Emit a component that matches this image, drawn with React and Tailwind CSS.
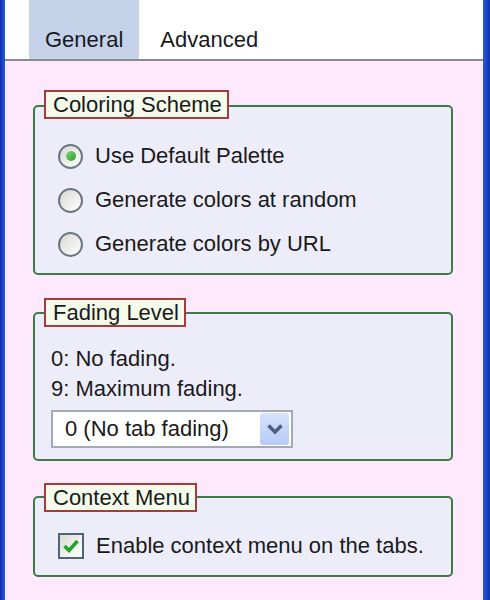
import React from "react";

const font = { fontFamily: '"Liberation Sans", Arial, sans-serif' };

function Legend({ children }) {
  return (
    <div className="relative z-10 ml-[11px] w-fit h-[29px] border-2 border-[#a43c3c] bg-[#f4fbea] pl-[7px] pr-[5px] text-[22px] leading-[25px] text-[#1a1a1a]">
      {children}
    </div>
  );
}

function Radio({ checked, label }) {
  return (
    <div className="flex h-[44px] items-center">
      <div className="flex h-[25px] w-[25px] items-center justify-center rounded-full border-2 border-[#6b7782] bg-gradient-to-br from-[#d8d8d2] to-white">
        {checked && (
          <div className="h-[10px] w-[10px] rounded-full bg-gradient-to-br from-[#7ee07e] to-[#1e9a2a]" />
        )}
      </div>
      <span className="ml-[12px] text-[22px] leading-[26px] text-[#1a1a1a]">{label}</span>
    </div>
  );
}

export default function App() {
  return (
    <div className="flex h-[600px] w-[490px] overflow-hidden bg-[#fde9fb]" style={font}>
      <div className="w-[5px] bg-gradient-to-r from-[#0a2fb0] to-[#2a5ae0]" />
      <div className="flex flex-1 flex-col">
        <div className="flex h-[59px] items-end bg-white pl-[24px]">
          <div className="flex h-full items-end bg-[#c4d2ea] px-[16px] pb-[5px] text-[22px] leading-[28px] text-[#1a1a1a]">
            General
          </div>
          <div className="pb-[5px] pl-[21px] text-[22px] leading-[28px] text-[#1a1a1a]">Advanced</div>
        </div>
        <div className="h-[2px] bg-[#8a8a8a]" />

        <div className="flex flex-col pl-[28px] pr-[30px] pt-[29px]">
          {/* Coloring Scheme */}
          <Legend>Coloring Scheme</Legend>
          <div className="-mt-[14px] h-[170px] rounded-[5px] border-2 border-[#3f7a4a] bg-[#ededfa] pl-[23px] pt-[27px]">
            <Radio checked label="Use Default Palette" />
            <Radio label="Generate colors at random" />
            <Radio label="Generate colors by URL" />
          </div>

          {/* Fading Level */}
          <div className="mt-[23px]">
            <Legend>Fading Level</Legend>
          </div>
          <div className="-mt-[15px] h-[149px] rounded-[5px] border-2 border-[#3f7a4a] bg-[#ededfa] pl-[16px] pt-[30px] text-[22px] text-[#1a1a1a]">
            <div className="h-[30px] leading-[30px]">0: No fading.</div>
            <div className="h-[30px] leading-[30px]">9: Maximum fading.</div>
            <div className="mt-[6px] flex h-[38px] w-[242px] items-center border-2 border-[#a3aab2] bg-white pl-[12px] pr-[2px]">
              <span className="flex-1 text-[22px] leading-[26px]">0 (No tab fading)</span>
              <div className="flex h-[32px] w-[29px] items-center justify-center rounded-[3px] bg-gradient-to-b from-[#d6e2fd] to-[#b7cbf6]">
                <svg width="18" height="12" viewBox="0 0 18 12">
                  <path d="M2.5 2.5 L9 9 L15.5 2.5" fill="none" stroke="#4d6185" strokeWidth="3.6" />
                </svg>
              </div>
            </div>
          </div>

          {/* Context Menu */}
          <div className="mt-[22px]">
            <Legend>Context Menu</Legend>
          </div>
          <div className="-mt-[16px] h-[81px] rounded-[5px] border-2 border-[#3f7a4a] bg-[#ededfa] pl-[23px] pt-[33px]">
            <div className="flex h-[30px] items-center">
              <div className="flex h-[26px] w-[26px] items-center justify-center border-2 border-[#4f6478] bg-gradient-to-br from-[#dcdcd6] to-white">
                <svg width="18" height="16" viewBox="0 0 18 16">
                  <path d="M2.5 8 L7 12.5 L15.5 3" fill="none" stroke="#22a22a" strokeWidth="3.6" />
                </svg>
              </div>
              <span className="ml-[12px] text-[22px] leading-[26px] text-[#1a1a1a]">
                Enable context menu on the tabs.
              </span>
            </div>
          </div>
        </div>
      </div>
      <div className="w-[7px] bg-gradient-to-r from-[#2a5ae0] to-[#0a2fb0]" />
    </div>
  );
}
